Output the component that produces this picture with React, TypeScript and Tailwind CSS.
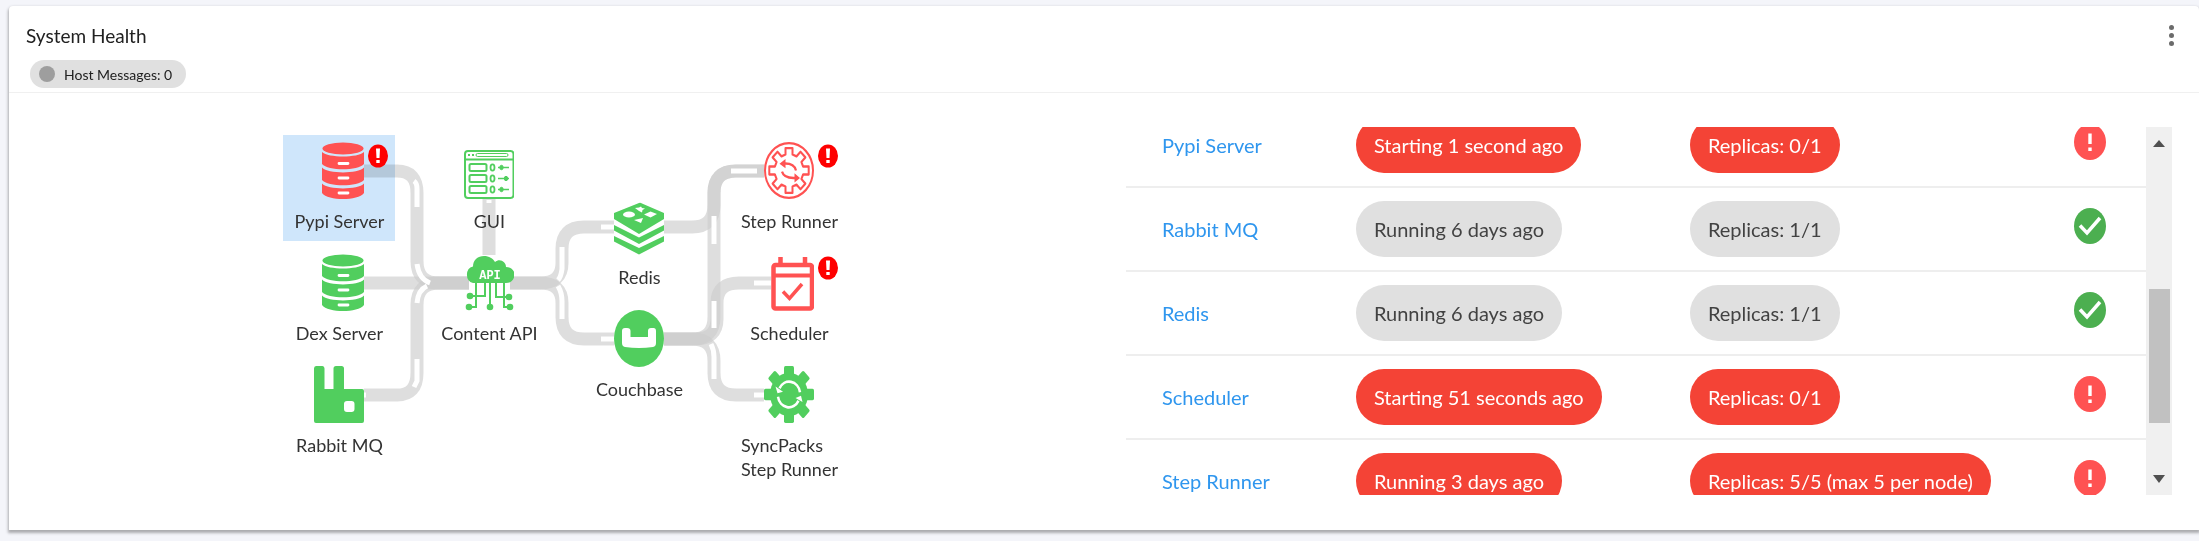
import React from 'react';

type Status = 'error' | 'ok';

interface Service {
  name: string;
  state: string;
  replicas: string;
  status: Status;
}

const SERVICES: Service[] = [
  { name: 'Pypi Server', state: 'Starting 1 second ago', replicas: 'Replicas: 0/1', status: 'error' },
  { name: 'Rabbit MQ', state: 'Running 6 days ago', replicas: 'Replicas: 1/1', status: 'ok' },
  { name: 'Redis', state: 'Running 6 days ago', replicas: 'Replicas: 1/1', status: 'ok' },
  { name: 'Scheduler', state: 'Starting 51 seconds ago', replicas: 'Replicas: 0/1', status: 'error' },
  { name: 'Step Runner', state: 'Running 3 days ago', replicas: 'Replicas: 5/5 (max 5 per node)', status: 'error' },
];

// Pipes between the services, in diagram coordinates
const EDGES = [
  'M81 36 H114 Q134 36 134 58 V126 Q134 148 156 148 H186',
  'M81 148 H186',
  'M81 260 H114 Q134 260 134 238 V170 Q134 148 156 148 H186',
  'M206 64 V120',
  'M227 148 H257 Q279 148 279 128 V114 Q279 92 301 92 H331',
  'M227 148 H257 Q279 148 279 168 V182 Q279 204 301 204 H331',
  'M381 92 H409 Q431 92 431 70 V58 Q431 36 453 36 H481',
  'M381 204 H409 Q431 204 431 182 V58 Q431 36 453 36 H481',
  'M381 204 H412 Q434 204 434 184 V168 Q434 148 456 148 H488',
  'M381 204 H409 Q431 204 431 226 V238 Q431 260 453 260 H481',
];

const FLOW = [
  'M131 46 Q134 48 134 54 V72',
  'M134 129 Q136 144 147 148',
  'M134 168 Q135 155 144 151',
  'M134 224 V246 L131 252',
  'M81 260 H83',
  'M206 65 V68',
  'M279 112 V134 Q278 142 275 145',
  'M275 151 Q279 158 279 166 V184',
  'M318 92 H331',
  'M318 204 H331',
  'M431 81 V109',
  'M431 166 V193',
  'M448 36 H474',
  'M471 148 H488',
  'M428 209 Q431 215 431 222 V244',
  'M471 260 H481',
];

const gearOutline = () => {
  const points: string[] = [];
  for (let i = 0; i < 8; i++) {
    const base = i * 45;
    [[-14, 14.5], [-10, 20], [10, 20], [14, 14.5]].forEach(([deg, r]) => {
      const a = ((base + deg) * Math.PI) / 180;
      points.push(`${(25 + r * Math.cos(a)).toFixed(1)} ${(25 + r * Math.sin(a)).toFixed(1)}`);
    });
  }
  return `M${points.join(' L')}Z`;
};

const DatabaseIcon = () => (
  <svg viewBox="0 0 50 57" className="h-[57px] w-[50px]" fill="currentColor">
    <ellipse cx="29" cy="6.5" rx="20.5" ry="6" />
    <path d="M8 10 C14 16 44 16 50 10 V22 C44 29 14 29 8 22Z" />
    <path d="M8 25.5 C14 32 44 32 50 25.5 V38 C44 45 14 45 8 38Z" />
    <path d="M8 41.5 C14 48 44 48 50 41.5 V51 C44 59 14 59 8 51Z" />
    <path d="M25 21.5 H34 M25 36 H34 M25 51 H34" stroke="#fff" strokeWidth="2.8" strokeLinecap="round" />
  </svg>
);

const GuiIcon = () => (
  <svg viewBox="0 0 50 57" className="h-[57px] w-[50px]" fill="none" stroke="currentColor">
    <rect x="1" y="9" width="48.5" height="47" rx="3" fill="#fff" strokeWidth="2" />
    <path d="M1 17.5 H49.5" strokeWidth="2" />
    <rect x="12" y="11.5" width="32" height="3" rx="1.5" strokeWidth="1" />
    <path d="M4 13 H6 M8 13 H10" strokeWidth="2" />
    {[25.5, 36.5, 47.5].map((y, i) => (
      <g key={y}>
        <rect x="5.5" y={y - 3.5} width="17" height="7" rx="1.5" strokeWidth="2" />
        <ellipse cx="28.5" cy={y} rx="2" ry="3.2" strokeWidth="1.8" />
        <path d={`M34 ${y} H45`} strokeWidth="1.5" />
        <ellipse cx={i === 1 ? 42 : 37.5} cy={y} rx="1.7" ry="2.2" fill="currentColor" />
      </g>
    ))}
  </svg>
);

const ApiIcon = () => (
  <svg viewBox="0 0 50 57" className="h-[57px] w-[50px]">
    <path
      d="M9 29 A8 8.5 0 0 1 9 12.500 C9 6 14 2 20 2 C25 2 29 4.500 31 8 C36 4 42 8 42 13 C47 13 51 16.500 50.500 21 C50 26 47 29 42 29Z"
      fill="currentColor"
    />
    <path
      d="M21 29 V42 H6 M12 29 V53 H5 M26 29 V53 M32 29 V43 H45 M40 29 V53 H47"
      fill="none"
      stroke="currentColor"
      strokeWidth="2"
    />
    <g fill="currentColor">
      <circle cx="6" cy="42" r="3.3" />
      <circle cx="5" cy="53" r="3.3" />
      <circle cx="26" cy="53" r="3.3" />
      <circle cx="45" cy="43" r="3.3" />
      <circle cx="46" cy="53" r="3.3" />
    </g>
    <text x="26" y="25" textAnchor="middle" fill="#fff" className="font-['Liberation_Mono',monospace] text-[12px] font-bold">
      API
    </text>
  </svg>
);

const RabbitIcon = () => (
  <svg viewBox="0 0 50 57" className="h-[57px] w-[50px]" fill="currentColor">
    <path
      fillRule="evenodd"
      d="M2 0 H8.500 Q10.500 0 10.500 2.500 V23 H19.500 V2.500 Q19.500 0 22 0 H27.500 Q30 0 30 2.500 V23 H48 Q50 23 50 25 V55 Q50 57 48 57 H2 Q0 57 0 55 V2.500 Q0 0 2 0Z M33 35 Q30 35 30 38 V43 Q30 46 33 46 H37.500 Q40.500 46 40.500 43 V38 Q40.500 35 37.500 35Z"
    />
  </svg>
);

const RedisIcon = () => (
  <svg viewBox="0 0 50 57" className="h-[57px] w-[50px]" fill="currentColor">
    <path
      d="M25 5 Q26.500 4.500 28 5.500 L50 15 V21 L25 36 L0 21 V15Z M0 27 L25 39.500 L50 27 V32.500 L25 46 L0 32.500Z M0 38 L25 50 L50 38 V43.500 L25 56.500 L0 43.500Z"
      stroke="#fff"
      strokeWidth="1"
      paintOrder="stroke"
    />
    <g fill="#fff">
      <ellipse cx="15" cy="16.500" rx="6" ry="3" />
      <path d="M21 10 L25 9.500 L27 8.500 L28 10 L31 10.500 L28.500 12 L28 14.500 L25 13Z" />
      <path d="M30 16.500 L36.500 13.500 L43 16 L36.500 19.500Z" />
      <path d="M20 22 L29 20 L27 25Z" />
    </g>
  </svg>
);

const CouchbaseIcon = () => (
  <svg viewBox="0 0 50 57" className="h-[57px] w-[50px]">
    <ellipse cx="25" cy="28.500" rx="25" ry="28.500" fill="currentColor" />
    <path
      d="M8 21 Q8 18 11 18 H13 Q16.500 18 16.500 21 V27 H34 V21 Q34 18 37 18 H39.500 Q42 18 42 21 V33 Q42 36.500 39 37 Q25 39 11 37 Q8 36.500 8 33Z"
      fill="#fff"
    />
  </svg>
);

const StepRunnerIcon = () => (
  <svg viewBox="0 0 50 50" preserveAspectRatio="none" className="h-[57px] w-[50px]" fill="none" stroke="currentColor">
    <circle cx="25" cy="25" r="24" fill="#fff" strokeWidth="2" />
    <path d={gearOutline()} strokeWidth="2" strokeLinejoin="round" />
    <path d="M32 25 Q30 18.500 20 19 M18 26 Q20 32 31 31.500" strokeWidth="2.200" />
    <path d="M15.500 19 L21.500 15 V23Z M36 31.500 L30.500 27.500 V35.500Z" fill="currentColor" stroke="none" />
  </svg>
);

const SchedulerIcon = () => (
  <svg viewBox="0 0 50 57" className="h-[57px] w-[50px]" fill="none" stroke="currentColor">
    <rect x="9.500" y="11" width="38.500" height="43.500" rx="2" fill="#fff" strokeWidth="4.500" />
    <path d="M8 21.500 H50" strokeWidth="4" />
    <path d="M16.500 3 V10 M41 3 V10" strokeWidth="4.500" />
    <path d="M19 37.500 L25.500 44.500 L38 30" strokeWidth="3.500" />
  </svg>
);

const SyncPacksIcon = () => (
  <svg viewBox="0 0 50 50" preserveAspectRatio="none" className="h-[57px] w-[50px]">
    <circle cx="25" cy="25" r="19" fill="currentColor" />
    {[0, 45, 90, 135].map((deg) => (
      <rect key={deg} x="20" y="0" width="10" height="50" rx="1.500" fill="currentColor" transform={`rotate(${deg} 25 25)`} />
    ))}
    <path d="M36 23 A11 11 0 0 0 15.500 19.500 M14 27 A11 11 0 0 0 34.500 30.500" fill="none" stroke="#fff" strokeWidth="2.500" />
    <path d="M11.500 18 L19 22.500 L13.500 24Z M38.500 31.500 L31.500 28 L37 26Z" fill="#fff" />
  </svg>
);

interface DiagramNode {
  label: string[];
  place: string;
  color: string;
  icon: React.FC;
  alert?: boolean;
  selected?: boolean;
}

const GREEN = 'text-[#51ce5e]';
const RED = 'text-[#ff5252]';

const NODES: DiagramNode[] = [
  { label: ['Pypi Server'], place: 'left-0 top-0', color: RED, icon: DatabaseIcon, alert: true, selected: true },
  { label: ['Dex Server'], place: 'left-0 top-[112px]', color: GREEN, icon: DatabaseIcon },
  { label: ['Rabbit MQ'], place: 'left-0 top-[224px]', color: GREEN, icon: RabbitIcon },
  { label: ['GUI'], place: 'left-[150px] top-0', color: GREEN, icon: GuiIcon },
  { label: ['Content API'], place: 'left-[150px] top-[112px]', color: GREEN, icon: ApiIcon },
  { label: ['Redis'], place: 'left-[300px] top-[56px]', color: GREEN, icon: RedisIcon },
  { label: ['Couchbase'], place: 'left-[300px] top-[168px]', color: GREEN, icon: CouchbaseIcon },
  { label: ['Step Runner'], place: 'left-[450px] top-0', color: RED, icon: StepRunnerIcon, alert: true },
  { label: ['Scheduler'], place: 'left-[450px] top-[112px]', color: RED, icon: SchedulerIcon, alert: true },
  { label: ['SyncPacks', 'Step Runner'], place: 'left-[450px] top-[224px]', color: GREEN, icon: SyncPacksIcon },
];

const AlertBadge = () => (
  <svg viewBox="0 0 20 24" className="absolute left-[85px] top-[9px] h-[24px] w-[20px]">
    <ellipse cx="10" cy="12" rx="10" ry="11.500" fill="#fe0000" />
    <path d="M8 4.500 H12 L11.500 14 H8.500Z M8.300 16 H11.700 V19 H8.300Z" fill="#fff" />
  </svg>
);

const Diagram: React.FC = () => (
  <div className="relative h-[350px] w-[568px]">
    <svg viewBox="0 0 568 350" className="absolute inset-0 h-full w-full" fill="none">
      {EDGES.map((d) => (
        <path key={d} d={d} stroke="#cccccc" strokeOpacity="0.65" strokeWidth="13" />
      ))}
      {FLOW.map((d) => (
        <path key={d} d={d} stroke="#fff" strokeWidth="5" />
      ))}
    </svg>
    {/* tint sits over the pipes so they show through the selected node */}
    <div className="absolute left-0 top-0 h-[106px] w-[112px] bg-[#cfe6fb] mix-blend-multiply" />
    {NODES.map(({ label, place, color, icon: Icon, alert, selected }) => (
      <button
        key={label.join(' ')}
        aria-pressed={!!selected}
        className={`absolute flex h-[106px] w-[112px] flex-col items-center gap-[10px] pt-[7px] ${place}`}
      >
        <span className={color}>
          <Icon />
        </span>
        <span className="text-left text-[18px] leading-[24px] whitespace-nowrap text-[#333]">
          {label.map((line) => (
            <span key={line} className="block">{line}</span>
          ))}
        </span>
        {alert && <AlertBadge />}
      </button>
    ))}
  </div>
);

const StatusIcon: React.FC<{ status: Status }> = ({ status }) => (
  <svg viewBox="0 0 32 36" className="h-9 w-8" role="img" aria-label={status}>
    <ellipse cx="16" cy="18" rx="16" ry="18" fill={status === 'ok' ? '#4caf50' : '#ff5252'} />
    {status === 'ok' ? (
      <path d="M6 17.500 L13 25 L26 10" fill="none" stroke="#fff" strokeWidth="3.500" />
    ) : (
      <path d="M14.300 9.500 H17.700 V20 H14.300Z M14.300 23.500 H17.700 V27 H14.300Z" fill="#fff" />
    )}
  </svg>
);

const Pill: React.FC<{ status: Status; children: React.ReactNode }> = ({ status, children }) => (
  <span
    className={`inline-flex h-14 items-center rounded-full px-[18px] whitespace-nowrap ${
      status === 'ok' ? 'bg-[#e0e0e0] text-[#424242]' : 'bg-[#f44336] text-white'
    }`}
  >
    {children}
  </span>
);

const ServiceTable: React.FC = () => (
  <div className="flex h-[368px]">
    <div
      className="min-w-0 flex-1 overflow-hidden"
      ref={(el) => {
        if (el) el.scrollTop = 24;
      }}
    >
      <table className="w-full table-fixed text-[20px]">
        <colgroup>
          <col className="w-[230px]" />
          <col className="w-[334px]" />
          <col />
          <col className="w-[72px]" />
        </colgroup>
        <tbody>
          {SERVICES.map(({ name, state, replicas, status }) => (
            <tr key={name} className="h-[84px] border-b-2 border-[#eeeeee]">
              <td className="pl-9">
                <a href="#" className="text-[#2f96ee]">{name}</a>
              </td>
              <td>
                <Pill status={status}>{state}</Pill>
              </td>
              <td>
                <Pill status={status}>{replicas}</Pill>
              </td>
              <td className="pb-1.5">
                <StatusIcon status={status} />
              </td>
            </tr>
          ))}
        </tbody>
      </table>
    </div>
    <div className="flex w-[26px] flex-col items-center bg-[#f0f0f0] py-3">
      <svg viewBox="0 0 12 7" className="mt-[1px] h-[7px] w-[12px]"><path d="M6 0 L12 7 H0Z" fill="#505050" /></svg>
      <div className="mt-[142px] h-[134px] w-[21px] bg-[#c1c1c1]" />
      <svg viewBox="0 0 12 8" className="mt-auto h-[8px] w-[12px]"><path d="M0 0 H12 L6 8Z" fill="#505050" /></svg>
    </div>
  </div>
);

const App: React.FC = () => {
  return (
    <div className="bg-[#f4f5fa] pt-[6px] pb-[11px] pl-[9px] font-['Lato',sans-serif] text-[#212121]">
      <section className="rounded-t bg-white shadow-[0_2px_3px_1px_rgba(0,0,0,0.3)]">
        <header className="flex items-start justify-between border-b border-[#f0f0f0] pt-[18px] pr-[22px] pb-[4px] pl-[17px]">
          <div>
            <h1 className="text-[19px] leading-[24px]">System Health</h1>
            <div className="mt-[12px] ml-[4px] flex h-[28px] items-center gap-[9px] rounded-full bg-[#e0e0e0] pr-[14px] pl-[9px] text-[14px]">
              <span className="h-4 w-4 rounded-full bg-[#9e9e9e]" />
              Host Messages: 0
            </div>
          </div>
          <button aria-label="More options" className="flex h-[22px] w-3 flex-col items-center justify-center gap-[3px]">
            <span className="h-[5px] w-[5px] rounded-full bg-[#6b6b6b]" />
            <span className="h-[5px] w-[5px] rounded-full bg-[#6b6b6b]" />
            <span className="h-[5px] w-[5px] rounded-full bg-[#6b6b6b]" />
          </button>
        </header>
        <div className="grid grid-cols-[51fr_49fr] pt-[34px] pb-[35px]">
          <div className="flex justify-center pt-2">
            <Diagram />
          </div>
          <div className="pr-[27px]">
            <ServiceTable />
          </div>
        </div>
      </section>
    </div>
  );
};

export default App;
